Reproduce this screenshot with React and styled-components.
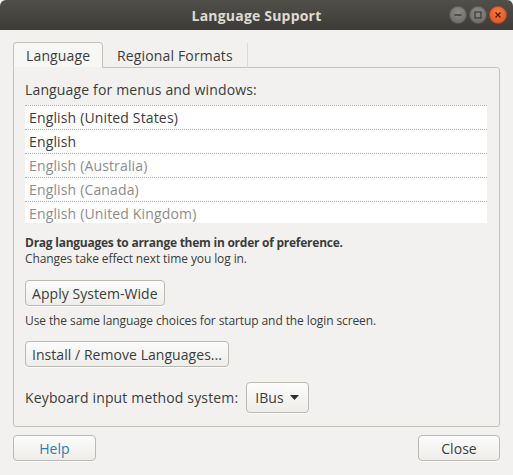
import React from "react";
import styled, { createGlobalStyle } from "styled-components";

const Global = createGlobalStyle`
  html, body {
    margin: 0;
    padding: 0;
    background: #f2f1f0;
  }
  body {
    font-family: "Open Sans", "Noto Sans", sans-serif;
    color: #3c3c3c;
  }
`

const Window = styled.div`
  width: 513px;
  height: 475px;
  display: flex;
  flex-direction: column;
  background: #f2f1f0;
  overflow: hidden;
`
const TitleBar = styled.div`
  height: 30px;
  flex: none;
  display: flex;
  align-items: center;
  justify-content: center;
  position: relative;
  background: linear-gradient(#504f4a, #3c3b37);
  border-radius: 6px 6px 0 0;
  color: #dfdbd2;
  font-weight: bold;
  font-size: 14px;
  letter-spacing: 0.2px;
`
const Controls = styled.div`
  position: absolute;
  right: 6px;
  top: 6px;
  display: flex;
  gap: 2px;
`
const Circle = styled.div`
  width: 18px;
  height: 18px;
  border-radius: 50%;
  display: flex;
  align-items: center;
  justify-content: center;
  background: ${p => p.close
    ? "radial-gradient(circle at 50% 35%, #f47a4a, #df4a16)"
    : "radial-gradient(circle at 50% 35%, #8c8b86, #64635f)"};
  box-shadow: inset 0 0 0 1px rgba(0,0,0,0.25);
`
const Content = styled.div`
  flex: 1;
  display: flex;
  flex-direction: column;
  padding: 12px 13px 14px 13px;
  font-size: 14px;
  letter-spacing: 0.15px;
`
const Tabs = styled.div`
  display: flex;
  height: 26px;
  margin-bottom: -1px;
  position: relative;
  z-index: 1;
`
const Tab = styled.div`
  display: flex;
  align-items: center;
  padding: 0 ${p => (p.active ? 12 : 14)}px;
  color: #3c3c3c;
  box-sizing: border-box;
  ${p => p.active
    ? `
    background: #f7f7f6;
    border: 1px solid #c4c1bb;
    border-bottom-color: #f2f1f0;
    border-radius: 4px 4px 0 0;
    width: 90px;
  `
    : `
    border-right: 1px solid #dcdad6;
    height: 25px;
    align-self: flex-end;
  `}
`
const Panel = styled.div`
  border: 1px solid #c4c1bb;
  border-radius: 0 3px 3px 3px;
  padding: 12px 12px 13px 11px;
  display: flex;
  flex-direction: column;
  align-items: flex-start;
`
const Label = styled.div`
  line-height: 20px;
  margin-bottom: 5px;
`
const List = styled.div`
  align-self: stretch;
  height: 118px;
  overflow: hidden;
  background: #ffffff;
`
const Row = styled.div`
  height: 24px;
  box-sizing: border-box;
  border-top: 1px dotted #d8a184;
  padding-left: 4px;
  line-height: 23px;
  color: ${p => (p.dim ? "#8c8c8c" : "#3c3c3c")};
`
const Note = styled.div`
  font-size: 12px;
  line-height: 16px;
  font-weight: ${p => (p.bold ? "bold" : "normal")};
  letter-spacing: ${p => (p.bold ? "-0.25px" : "-0.1px")};
  margin-top: ${p => p.top || 0}px;
`
const Button = styled.div`
  height: 26px;
  box-sizing: border-box;
  display: flex;
  align-items: center;
  justify-content: center;
  padding: 0 6px;
  margin-top: ${p => p.top || 0}px;
  min-width: ${p => p.width || 0}px;
  letter-spacing: 0.05px;
  color: ${p => (p.link ? "#2b7cb5" : "#3c3c3c")};
  background: linear-gradient(#fcfcfc, #eeedeb);
  border: 1px solid #bcb9b3;
  border-radius: 4px;
  box-shadow: 0 1px 0 rgba(255,255,255,0.8);
`
const InputRow = styled.div`
  display: flex;
  align-items: center;
  gap: 8px;
  margin-top: 15px;
`
const Combo = styled(Button)`
  height: 31px;
  width: 63px;
  justify-content: space-between;
  padding: 0 9px 0 8px;
`
const Footer = styled.div`
  display: flex;
  justify-content: space-between;
  margin-top: 8px;
`

const languages = [
  { name: "English (United States)" },
  { name: "English" },
  { name: "English (Australia)", dim: true },
  { name: "English (Canada)", dim: true },
  { name: "English (United Kingdom)", dim: true },
]

export default function App() {
  return (
    <Window>
      <Global />
      <TitleBar>
        Language Support
        <Controls>
          <Circle>
            <svg width="10" height="10" viewBox="0 0 10 10">
              <path d="M1.5 5h7" stroke="#3a3935" strokeWidth="1.4" />
            </svg>
          </Circle>
          <Circle>
            <svg width="10" height="10" viewBox="0 0 10 10">
              <rect x="2" y="2" width="6" height="6" fill="none" stroke="#3a3935" strokeWidth="1.2" />
            </svg>
          </Circle>
          <Circle close>
            <svg width="10" height="10" viewBox="0 0 10 10">
              <path d="M2.5 2.5l5 5M7.5 2.5l-5 5" stroke="#5a1e08" strokeWidth="1.4" />
            </svg>
          </Circle>
        </Controls>
      </TitleBar>
      <Content>
        <Tabs>
          <Tab active>Language</Tab>
          <Tab>Regional Formats</Tab>
        </Tabs>
        <Panel>
          <Label>Language for menus and windows:</Label>
          <List>
            {languages.map(l => (
              <Row key={l.name} dim={l.dim}>{l.name}</Row>
            ))}
          </List>
          <Note bold top={12}>Drag languages to arrange them in order of preference.</Note>
          <Note>Changes take effect next time you log in.</Note>
          <Button top={13}>Apply System-Wide</Button>
          <Note top={7}>Use the same language choices for startup and the login screen.</Note>
          <Button top={12}>Install / Remove Languages...</Button>
          <InputRow>
            Keyboard input method system:
            <Combo>
              IBus
              <svg width="9" height="5" viewBox="0 0 9 5">
                <path d="M0 0h9L4.5 5z" fill="#2e2e2e" />
              </svg>
            </Combo>
          </InputRow>
        </Panel>
        <Footer>
          <Button link width={83}>Help</Button>
          <Button width={82}>Close</Button>
        </Footer>
      </Content>
    </Window>
  );
}
